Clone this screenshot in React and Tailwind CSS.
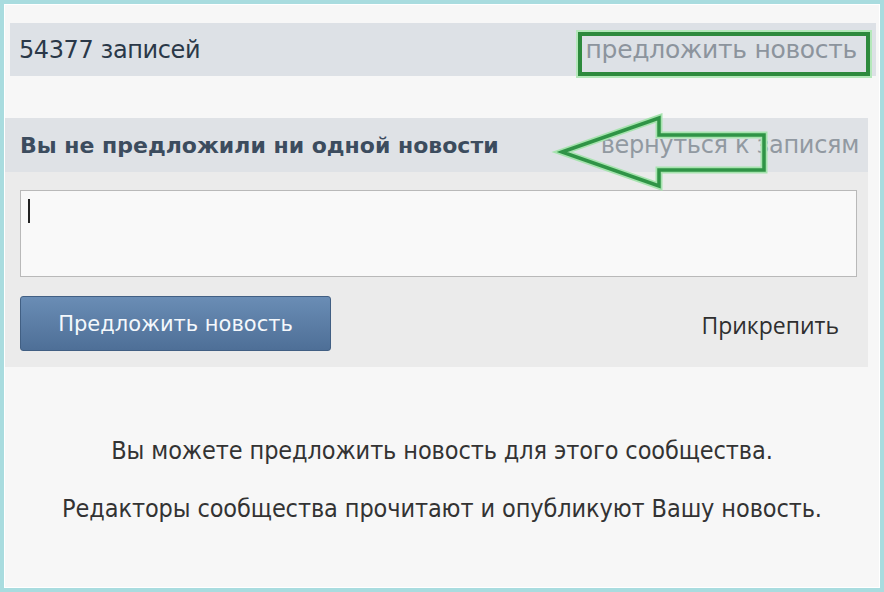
import React from "react";

const Arrow = () => (
  <svg
    className="absolute left-0 top-0 pointer-events-none"
    width="884"
    height="592"
    viewBox="0 0 884 592"
  >
    <polygon
      points="558,148 655,114 655,131 760,131 760,166 655,166 655,182"
      fill="none"
      stroke="#a6e3ae"
      strokeWidth="7"
      strokeLinejoin="miter"
    />
    <polygon
      points="558,148 655,114 655,131 760,131 760,166 655,166 655,182"
      fill="none"
      stroke="#2f9446"
      strokeWidth="3.5"
      strokeLinejoin="miter"
    />
  </svg>
);

export default function App() {
  return (
    <div className="relative w-[884px] h-[592px] overflow-hidden border-4 border-[#a9dcdf] bg-[#f7f7f7] font-['Liberation_Sans',sans-serif]">
      <div className="flex flex-col h-full border border-white">
        {/* top bar */}
        <div className="mt-[18px] ml-[5px] mr-[3px] h-[53px] bg-[#dde1e6] flex items-center justify-between pl-[9px] pr-[19px]">
          <span className="text-[24px] text-[#2a3848] font-['DejaVu_Sans',sans-serif] tracking-[-0.4px]">
            54377 записей
          </span>
          <span className="text-[25px] text-[#8c949d] font-['DejaVu_Sans',sans-serif] tracking-[-0.3px]">
            предложить новость
          </span>
        </div>

        <div className="h-[42px]" />

        {/* title bar */}
        <div className="h-[54px] mr-[11px] bg-[#dfe2e6] flex items-center justify-between pl-[15px] pr-[9px]">
          <span className="text-[22px] font-bold text-[#3c4c5e] font-['DejaVu_Sans',sans-serif]">
            Вы не предложили ни одной новости
          </span>
          <span className="text-[24px] text-[#9199a1] font-['DejaVu_Sans',sans-serif] tracking-[-0.3px]">
            вернуться к записям
          </span>
        </div>

        {/* form */}
        <div className="h-[195px] mr-[11px] bg-[#ebebeb] pl-[15px] pr-[11px] pt-[18px] flex flex-col">
          <div className="h-[87px] border border-[#b9b9b9] bg-[#f9f9f9] pl-[7px] pt-[8px]">
            <div className="w-[2px] h-[24px] bg-[#222]" />
          </div>
          <div className="flex items-center justify-between mt-[19px]">
            <button className="w-[311px] h-[55px] pt-[3px] rounded-[3px] border border-[#415f83] bg-gradient-to-b from-[#6a8db5] to-[#4e6f97] text-[#f4f8fc] text-[21px] font-['DejaVu_Sans',sans-serif]">
              Предложить новость
            </button>
            <span className="mr-[18px] mt-[4px] text-[23px] text-[#2f2f2f] font-['Open_Sans',sans-serif]">
              Прикрепить
            </span>
          </div>
        </div>

        {/* info */}
        <div className="flex-1 flex flex-col items-center pt-[65px] gap-[20px] text-[#333] text-[25px] font-['DejaVu_Sans_Condensed','Liberation_Sans_Narrow',sans-serif] tracking-[-0.1px]">
          <p>Вы можете предложить новость для этого сообщества.</p>
          <p>Редакторы сообщества прочитают и опубликуют Вашу новость.</p>
        </div>
      </div>

      {/* annotations */}
      <div className="absolute left-[572px] top-[26px] w-[296px] h-[48px] border-[2px] border-[#b4e8ba]">
        <div className="w-full h-full border-[4px] border-[#2d8a3d]" />
      </div>
      <Arrow />
    </div>
  );
}
